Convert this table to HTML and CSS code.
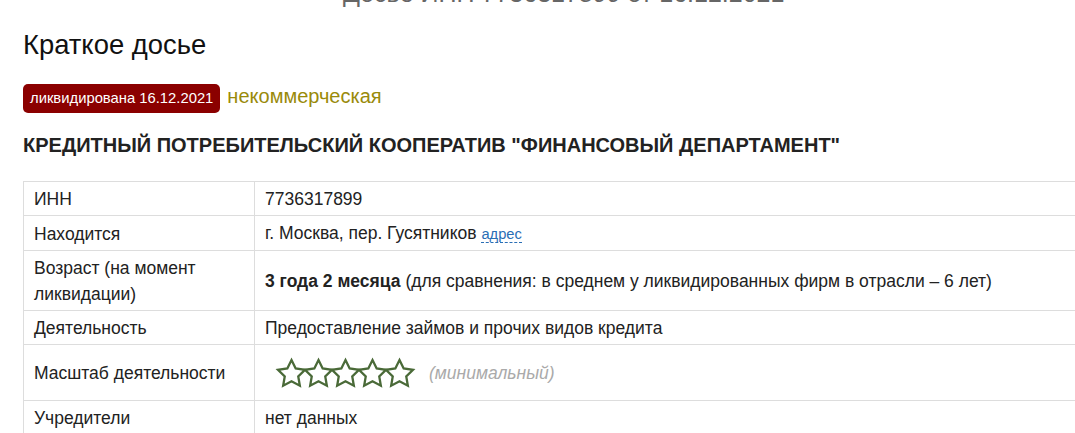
FILE: index.html
```html
<!DOCTYPE html>
<html lang="ru">
<head>
    <meta charset="UTF-8">
    <meta name="viewport" content="width=device-width, initial-scale=1.0">
    <title>Краткое досье</title>
    <link rel="stylesheet" href="styles.css">
</head>
<body>
    <div class="page">
        <h1 class="page-title">Досье ИНН 7736317899 от 16.12.2021</h1>

        <div class="dossier">
            <h2 class="section-title">Краткое досье</h2>

            <div class="labels">
                <span class="badge">ликвидирована 16.12.2021</span>
                <span class="kind">некоммерческая</span>
            </div>

            <h3 class="company">КРЕДИТНЫЙ ПОТРЕБИТЕЛЬСКИЙ КООПЕРАТИВ "ФИНАНСОВЫЙ ДЕПАРТАМЕНТ"</h3>

            <table class="info">
                <tr>
                    <td class="key">ИНН</td>
                    <td>7736317899</td>
                </tr>
                <tr>
                    <td class="key">Находится</td>
                    <td>г. Москва, пер. Гусятников <a href="#" class="addr">адрес</a></td>
                </tr>
                <tr>
                    <td class="key">Возраст (на момент ликвидации)</td>
                    <td><strong>3 года 2 месяца</strong> (для сравнения: в среднем у ликвидированных фирм в отрасли – 6 лет)</td>
                </tr>
                <tr>
                    <td class="key">Деятельность</td>
                    <td>Предоставление займов и прочих видов кредита</td>
                </tr>
                <tr>
                    <td class="key">Масштаб деятельности</td>
                    <td>
                        <div class="rating">
                            <div class="stars">
                                <svg class="star" viewBox="2 2 20 19.2"><path d="M12 2l3.09 6.26L22 9.27l-5 4.87 1.18 6.88L12 17.77l-6.18 3.25L7 14.14 2 9.27l6.91-1.01L12 2z"></path></svg>
                                <svg class="star" viewBox="2 2 20 19.2"><path d="M12 2l3.09 6.26L22 9.27l-5 4.87 1.18 6.88L12 17.77l-6.18 3.25L7 14.14 2 9.27l6.91-1.01L12 2z"></path></svg>
                                <svg class="star" viewBox="2 2 20 19.2"><path d="M12 2l3.09 6.26L22 9.27l-5 4.87 1.18 6.88L12 17.77l-6.18 3.25L7 14.14 2 9.27l6.91-1.01L12 2z"></path></svg>
                                <svg class="star" viewBox="2 2 20 19.2"><path d="M12 2l3.09 6.26L22 9.27l-5 4.87 1.18 6.88L12 17.77l-6.18 3.25L7 14.14 2 9.27l6.91-1.01L12 2z"></path></svg>
                                <svg class="star" viewBox="2 2 20 19.2"><path d="M12 2l3.09 6.26L22 9.27l-5 4.87 1.18 6.88L12 17.77l-6.18 3.25L7 14.14 2 9.27l6.91-1.01L12 2z"></path></svg>
                            </div>
                            <span class="scale-note">(минимальный)</span>
                        </div>
                    </td>
                </tr>
                <tr>
                    <td class="key">Учредители</td>
                    <td>нет данных</td>
                </tr>
            </table>
        </div>
    </div>
</body>
</html>
```

FILE: styles.css
```css
* {
    margin: 0;
    padding: 0;
    box-sizing: border-box;
}

body {
    font-family: "Liberation Sans", Arial, sans-serif;
    color: #222;
    background: #fff;
    overflow: hidden;
}

.page {
    width: 1130px;
}

/* scrolled-away page heading, only its bottom edge shows */
.page-title {
    margin-top: -22px;
    height: 31px;
    line-height: 31px;
    padding-left: 343px;
    font-size: 25px;
    font-weight: normal;
    color: #666;
    white-space: nowrap;
}

.dossier {
    padding-left: 23px;
}

.section-title {
    margin-top: 20px;
    font-size: 27.4px;
    font-weight: normal;
    line-height: 32px;
    color: #111;
}

.labels {
    display: flex;
    align-items: baseline;
    gap: 7px;
    margin-top: 23px;
}

.badge {
    display: inline-block;
    background: #8b0000;
    color: #fff;
    font-size: 14.8px;
    line-height: 29px;
    height: 29px;
    padding: 0 7px;
    border-radius: 5px;
}

.kind {
    color: #998a0a;
    font-size: 20px;
}

.company {
    margin-top: 20px;
    font-size: 20px;
    font-weight: bold;
    line-height: 24px;
    color: #222;
}

.info {
    margin-top: 24px;
    width: 1090px;
    border-collapse: collapse;
    font-size: 17.5px;
    line-height: 26px;
}

.info td {
    border: 1px solid #ddd;
    padding: 4px 10px 3px;
    vertical-align: middle;
}

.info td.key {
    width: 231px;
}

.addr {
    font-size: 14.7px;
    color: #2a6eb5;
    text-decoration: none;
    border-bottom: 1px dashed #2a6eb5;
}

.rating {
    display: flex;
    align-items: center;
    height: 48px;
    padding-left: 13px;
}

.stars {
    display: flex;
}

.star {
    width: 27px;
    height: 26px;
    overflow: visible;
    fill: none;
    stroke: #4a6a38;
    stroke-width: 1.7;
    stroke-linejoin: miter;
}

.scale-note {
    margin-left: 16px;
    font-style: italic;
    color: #aaa;
}
```
